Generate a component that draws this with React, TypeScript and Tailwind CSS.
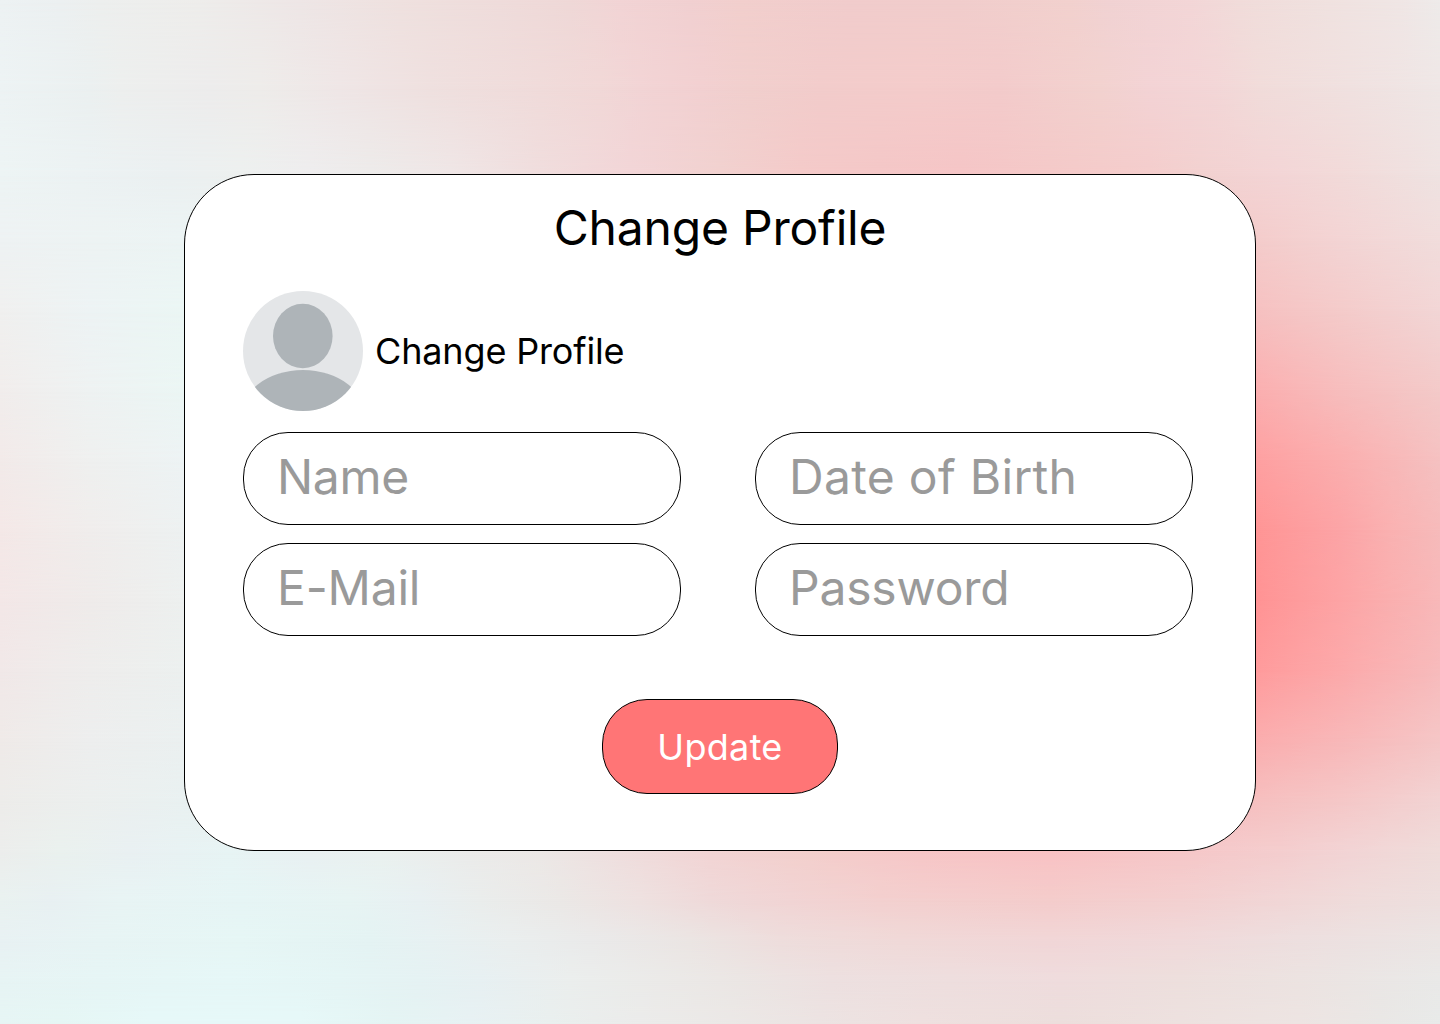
type GradientRow = { y: number; stops: [number, string][] };

// Colour mesh: each row is a horizontal gradient, neighbouring rows blend vertically.
const mesh: GradientRow[] = [
  { y: 0, stops: [[0, '#edf2f3'], [60, '#ecf0f1'], [100, '#edefee'], [200, '#eeedeb'], [300, '#eee6e6'], [400, '#efe1df'], [500, '#efdcdb'], [570, '#efd8d7'], [620, '#f2d4d5'], [690, '#f1d0d1'], [740, '#f2cfcd'], [850, '#f1cccc'], [960, '#f1cdcc'], [1070, '#f2d1ce'], [1110, '#f1d2d3'], [1190, '#f3d6d7'], [1240, '#f1dcda'], [1330, '#f0e2e0'], [1400, '#f0e6e5'], [1440, '#eeebea']] },
  { y: 87, stops: [[0, '#edf3f4'], [90, '#ebf0f0'], [120, '#edefee'], [210, '#edecec'], [260, '#eeecea'], [340, '#efe6e6'], [430, '#efe0df'], [540, '#f0dbda'], [600, '#f1d8d7'], [640, '#f2d4d5'], [700, '#f2d0d1'], [750, '#f1cfcd'], [820, '#f2cccb'], [920, '#f4cccb'], [1000, '#f3cbcb'], [1100, '#f2d2cf'], [1150, '#f3d3d5'], [1215, '#f3d6d7'], [1260, '#f1dcda'], [1350, '#f0e1e0'], [1440, '#efe7e6']] },
  { y: 174, stops: [[0, '#edf4f4'], [80, '#ecf2f3'], [170, '#ebf0f1'], [240, '#edf0ef'], [310, '#eeedee'], [370, '#edebea'], [450, '#efe6e6'], [540, '#f0dddd'], [630, '#f2d5d7'], [720, '#f1d1cf'], [800, '#f4cac9'], [880, '#f4c7c7'], [960, '#f5c5c6'], [1050, '#f4c9c8'], [1150, '#f4cdcc'], [1200, '#f2d1d0'], [1280, '#f3d5d6'], [1340, '#f2dad9'], [1440, '#efe3e2']] },
  { y: 240, stops: [[0, '#eef2f3'], [100, '#edf3f3'], [184, '#ecf4f4'], [1256, '#f4cccb'], [1340, '#f3d4d4'], [1440, '#f1dddc']] },
  { y: 310, stops: [[0, '#f0f0ef'], [90, '#edf3f4'], [184, '#ebf6f4'], [1256, '#f6c1c1'], [1340, '#f4cbca'], [1440, '#f2d6d6']] },
  { y: 390, stops: [[0, '#f1edec'], [90, '#eef2f2'], [184, '#ebf6f4'], [1256, '#fbafb0'], [1340, '#f7bdbd'], [1440, '#f3cac9']] },
  { y: 460, stops: [[0, '#f2eae9'], [90, '#eff0ef'], [184, '#edf3f4'], [1256, '#fea0a1'], [1340, '#fbaeae'], [1440, '#f5c1c1']] },
  { y: 530, stops: [[0, '#f4e8e7'], [90, '#f0edec'], [184, '#edf1f1'], [1256, '#ff9595'], [1340, '#fca4a6'], [1390, '#fab1b1'], [1440, '#f6bbbb']] },
  { y: 600, stops: [[0, '#f3e7e7'], [90, '#efebea'], [184, '#edf0ef'], [1256, '#ff9394'], [1340, '#fda4a5'], [1390, '#faafaf'], [1440, '#f8b8b9']] },
  { y: 670, stops: [[0, '#f1e8e8'], [90, '#eeedec'], [184, '#ecf0ef'], [1256, '#ff9b9c'], [1340, '#fca9aa'], [1440, '#f7bbbc']] },
  { y: 740, stops: [[0, '#efeae8'], [90, '#edeeee'], [184, '#ebf0f0'], [1256, '#fbadae'], [1340, '#f8b7b8'], [1440, '#f5c6c6']] },
  { y: 800, stops: [[0, '#edecea'], [90, '#ecefee'], [184, '#e9f1f1'], [1256, '#f6bfbf'], [1340, '#f5c7c7'], [1440, '#f2d3d3']] },
  { y: 851, stops: [[0, '#ecedec'], [60, '#eaf1ee'], [130, '#e9f0f2'], [230, '#e7f4f4'], [310, '#e9f0f2'], [380, '#eaf1ef'], [470, '#ebebea'], [540, '#ece8e6'], [620, '#efdede'], [710, '#f2d4d4'], [810, '#f3cfcc'], [920, '#f7c6c7'], [1050, '#f9c2c4'], [1180, '#f6c7c8'], [1280, '#f4cdce'], [1350, '#f2d4d5'], [1440, '#efdcda']] },
  { y: 900, stops: [[0, '#e9f2f0'], [50, '#e8f0f2'], [120, '#e8f4f4'], [240, '#e6f5f5'], [350, '#e7f4f3'], [420, '#e8f0f2'], [480, '#eaedec'], [560, '#ebe8e6'], [640, '#eee1e0'], [710, '#efd9d9'], [790, '#f1d4d4'], [880, '#f3d0cf'], [1050, '#f4cccb'], [1180, '#f3d0d0'], [1280, '#f1d6d6'], [1360, '#efdcdb'], [1440, '#eddfde']] },
  { y: 940, stops: [[0, '#e8f1f3'], [100, '#e7f4f4'], [240, '#e6f6f5'], [370, '#e4f3f3'], [430, '#e7f1f2'], [510, '#eaeeee'], [590, '#eaeaea'], [690, '#ebe5e3'], [780, '#eedddc'], [900, '#f0d9d8'], [1050, '#f1d6d7'], [1180, '#f0d9da'], [1300, '#eddfdf'], [1440, '#ebe5e4']] },
  { y: 980, stops: [[0, '#e7f4f4'], [100, '#e6f5f5'], [230, '#e6f7f7'], [340, '#e5f5f5'], [420, '#e5f2f3'], [480, '#e7f0f2'], [570, '#ebeeed'], [680, '#ebe9e7'], [740, '#ebe6e4'], [830, '#ede0e0'], [950, '#eedede'], [1060, '#efdcdd'], [1180, '#eddfdd'], [1300, '#ece3e1'], [1440, '#e9e9e8']] },
  { y: 1024, stops: [[0, '#e6f5f4'], [60, '#e5f6f4'], [150, '#e6f8f8'], [300, '#e6f8f8'], [390, '#e4f4f3'], [470, '#e7f1f3'], [550, '#e9efee'], [640, '#ebebea'], [730, '#ebe8e6'], [820, '#ece3e2'], [920, '#eee0df'], [1060, '#ecdedc'], [1180, '#ede1df'], [1300, '#ede4e2'], [1380, '#e9e7e5'], [1440, '#e8eae9']] },
];

function MeshBackground() {
  return (
    <div aria-hidden="true" className="absolute inset-0">
      {mesh.map((row, i) => {
        const fade =
          i === 0
            ? undefined
            : `linear-gradient(to bottom, transparent ${mesh[i - 1].y}px, black ${row.y}px)`;
        return (
          <div
            key={row.y}
            className="absolute inset-0"
            style={{
              backgroundImage: `linear-gradient(to right, ${row.stops.map(([x, c]) => `${c} ${x}px`).join(', ')})`,
              maskImage: fade,
            }}
          />
        );
      })}
    </div>
  );
}

function Avatar() {
  return (
    <svg viewBox="0 0 120 120" className="size-[120px] shrink-0" aria-hidden="true">
      <defs>
        <clipPath id="avatar-clip">
          <circle cx="60" cy="60" r="60" />
        </clipPath>
      </defs>
      <g clipPath="url(#avatar-clip)">
        <rect width="120" height="120" fill="#E4E6E8" />
        <ellipse cx="59.8" cy="45" rx="29.8" ry="32.2" fill="#AEB4B8" />
        <ellipse cx="60" cy="129" rx="64.5" ry="50" fill="#AEB4B8" />
      </g>
    </svg>
  );
}

function Field({ label, type = 'text', tracking }: { label: string; type?: string; tracking: string }) {
  return (
    <input
      type={type}
      placeholder={label}
      aria-label={label}
      className={`h-[93px] w-[438px] rounded-[45px] border border-black bg-white pr-8 pb-[5px] pl-[33px] text-[48px] text-black outline-none placeholder:text-[#9a9a9a] placeholder:opacity-100 ${tracking}`}
    />
  );
}

export default function App() {
  return (
    <main className="relative flex h-[1024px] w-[1440px] justify-center overflow-hidden pt-[174px] font-['Inter',sans-serif]">
      <MeshBackground />
      <form
        className="relative flex h-[677px] w-[1072px] flex-col rounded-[70px] border border-black bg-white px-[58px] pt-6"
        onSubmit={(e) => e.preventDefault()}
      >
        <h1 className="text-center text-[48px] leading-[58px] tracking-[-0.2px] text-black">Change Profile</h1>
        <div className="mt-[34px] flex items-center gap-3">
          <Avatar />
          <span className="text-[36px] leading-[44px] tracking-[-0.15px] text-black">Change Profile</span>
        </div>
        <div className="mt-[21px] grid grid-cols-[438px_438px] gap-x-[74px] gap-y-[18px]">
          <Field label="Name" tracking="tracking-[-0.3px]" />
          <Field label="Date of Birth" tracking="tracking-[0.3px]" />
          <Field label="E-Mail" type="email" tracking="tracking-[-0.2px]" />
          <Field label="Password" type="password" tracking="tracking-[-0.2px]" />
        </div>
        <button
          type="submit"
          className="mt-[63px] h-[95px] w-[236px] self-center rounded-[45px] border border-black bg-[#ff7576] text-[36px] leading-[44px] tracking-[0.3px] text-white"
        >
          Update
        </button>
      </form>
    </main>
  );
}
